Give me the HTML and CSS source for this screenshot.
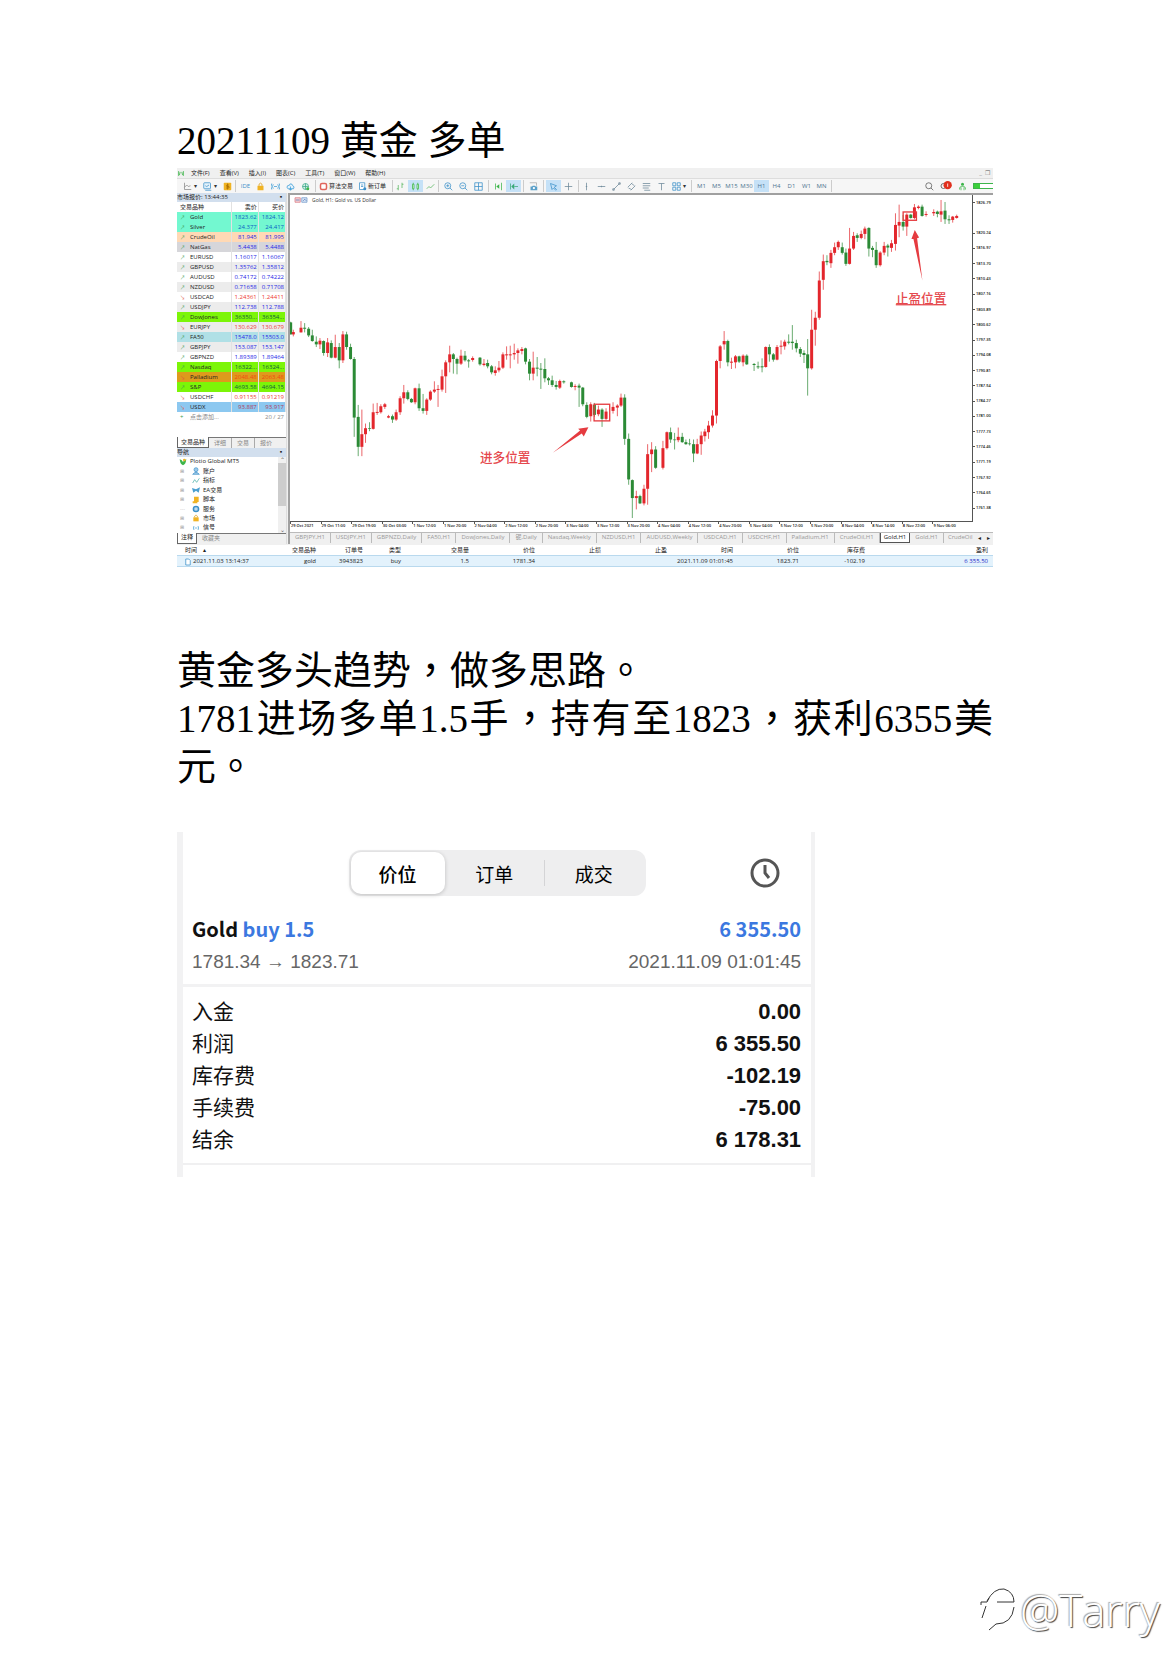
FILE: index.html
```html
<!DOCTYPE html>
<html lang="zh-CN">
<head>
<meta charset="utf-8">
<meta name="viewport" content="width=device-width, initial-scale=1">
<title>20211109 黄金 多单</title>
<link rel="stylesheet" href="styles.css">
</head>
<body>
<main class="doc">
<h1 class="doc-title">20211109 黄金 多单</h1>

<section class="terminal" aria-label="MT5">
  <nav class="menubar">
    <svg class="logo" viewBox="0 0 10 8"><path d="M2 1v6M4 2l-1 4M6 2l1 4M8 1v6" stroke="#3db54a" fill="none"/></svg>
    <a href="#">文件(F)</a><a href="#">查看(V)</a><a href="#">插入(I)</a><a href="#">图表(C)</a><a href="#">工具(T)</a><a href="#">窗口(W)</a><a href="#">帮助(H)</a>
    <span class="win-controls">_ &nbsp;❐</span>
  </nav>

  <div class="toolbar">
    <div class="group group-first">
      <button class="drop" aria-label="图表"><svg viewBox="0 0 12 12"><path d="M2 1v9h9M2 7l3-3 2 2 3-1" stroke="#888" fill="none"/></svg><i>▾</i></button>
      <button class="drop" aria-label="模板"><svg viewBox="0 0 12 12"><rect x="1" y="1" width="9" height="8" rx="1" stroke="#3a8fc8" fill="#e4f2fb"/><path d="M3 5l2 1 3-2M3 11h8" stroke="#3a8fc8" fill="none"/></svg><i>▾</i></button>
      <button aria-label="金额"><svg viewBox="0 0 12 12"><rect x="1" y="1" width="10" height="10" rx="1" fill="#f0b323"/><path d="M8 4H5v2h3v2H4M6 2v8" stroke="#a86c00" fill="none"/></svg></button>
    </div>
    <div class="group wide">
      <button class="ide">IDE</button>
      <button aria-label="市场"><svg viewBox="0 0 12 12"><path d="M2 5h8v6H2z" fill="#f0b323"/><path d="M4 5V3q2-3 4 0v2" stroke="#d89a10" fill="none"/></svg></button>
      <button aria-label="信号"><svg viewBox="0 0 12 12"><path d="M3 3q-2 3 0 6M9 3q2 3 0 6M4 6h4M1 2q-2 4 0 8M11 2q2 4 0 8" stroke="#3a9bd5" fill="none"/></svg></button>
      <button aria-label="云"><svg viewBox="0 0 12 12"><path d="M3 9q-3-1-1-4 1-1 2 0 1-4 4-2l1 2q3 1 1 4zM6 6v5M4 9l2 2 2-2" stroke="#3a9bd5" fill="#e4f2fb"/></svg></button>
      <button aria-label="网络"><svg viewBox="0 0 12 12"><circle cx="6" cy="6" r="4" stroke="#3aa88a" fill="#d8f0e8"/><path d="M2 6h8M6 2v8" stroke="#3aa88a"/><circle cx="9" cy="9" r="2" fill="#3db54a"/></svg></button>
    </div>
    <div class="group wide">
      <button class="text-button"><svg viewBox="0 0 12 12"><rect x="2" y="2" width="8" height="8" rx="2" stroke="#e0655c" stroke-width="2" fill="#fff"/></svg>算法交易</button>
      <button class="text-button"><svg viewBox="0 0 12 12"><path d="M2 1h7v9H2zM4 4h3M4 6h3" stroke="#3a8fc8" fill="#fff"/><circle cx="9" cy="9" r="2" fill="#3a8fc8"/></svg>新订单</button>
    </div>
    <div class="group">
      <button aria-label="柱形图"><svg viewBox="0 0 12 12"><path d="M3 4v7M1 9h2M8 1v7M8 3h2" stroke="#57b65f" fill="none"/></svg></button>
      <button class="on" aria-label="蜡烛图"><svg viewBox="0 0 12 12"><path d="M3 1v10M9 1v10" stroke="#3db54a"/><path d="M2 3h2v6H2zM8 3h2v6H8z" stroke="#3db54a" fill="#d9f4d9"/></svg></button>
      <button aria-label="折线图"><svg viewBox="0 0 12 12"><path d="M1 9l3-3 2 2 5-5" stroke="#57b65f" fill="none"/></svg></button>
    </div>
    <div class="group wide">
      <button aria-label="放大"><svg viewBox="0 0 12 12"><circle cx="5" cy="5" r="4" class="ln"/><path d="M8 8l3 3M3 5h4M5 3v4" class="ln"/></svg></button>
      <button aria-label="缩小"><svg viewBox="0 0 12 12"><circle cx="5" cy="5" r="4" class="ln"/><path d="M8 8l3 3M3 5h4" class="ln"/></svg></button>
      <button aria-label="平铺"><svg viewBox="0 0 12 12"><path d="M1 1h10v10H1zM6 1v10M1 6h10" class="ln"/></svg></button>
    </div>
    <div class="group wide">
      <button aria-label="自动滚动"><svg viewBox="0 0 12 12"><path d="M2 2v8M10 1v10" stroke="#3db54a"/><path d="M3 6l4-3v6z" fill="#3db54a"/></svg></button>
      <button class="on" aria-label="图表平移"><svg viewBox="0 0 12 12"><path d="M2 2v8M7 6h5" stroke="#3aa878"/><path d="M3 6l4-4v8z" fill="#3aa878"/></svg></button>
    </div>
    <div class="group wide">
      <button aria-label="截图"><svg viewBox="0 0 12 12"><path d="M1 1h9v4" stroke="#aaa" fill="none"/><path d="M2 6h2l1-1h3l1 1h2v5H2z" fill="#5a9fc8"/><circle cx="6.500" cy="8" r="1.500" fill="#fff"/></svg></button>
    </div>
    <div class="group wide">
      <button class="on" aria-label="光标"><svg viewBox="0 0 12 12"><path d="M2 2l8 3-3 2 3 3-1 1-3-3-2 2z" class="ln"/></svg></button>
      <button aria-label="十字线"><svg viewBox="0 0 12 12"><path d="M6 1v10M1 6h10" class="gr"/></svg></button>
    </div>
    <div class="group">
      <button aria-label="垂直线"><svg viewBox="0 0 12 12"><path d="M6 1v10M5 6h2" class="gr"/></svg></button>
      <button aria-label="水平线"><svg viewBox="0 0 12 12"><path d="M1 6h10M6 5v2" class="gr"/></svg></button>
      <button aria-label="趋势线"><svg viewBox="0 0 12 12"><path d="M2 10l8-8M1 9h2v2H1zM9 1h2v2H9z" class="gr"/></svg></button>
      <button aria-label="通道"><svg viewBox="0 0 12 12"><path d="M1 7l6-6M5 11l6-6M2 8l4 2M6 2l4 3" class="gr"/></svg></button>
      <button aria-label="斐波那契"><svg viewBox="0 0 12 12"><path d="M1 2h10M1 5h10M1 8h8M3 11h8" class="gr"/></svg></button>
      <button aria-label="文本"><svg viewBox="0 0 12 12"><path d="M2 2h8M6 2v9" class="gr"/></svg></button>
      <button class="drop shapes" aria-label="图形"><svg viewBox="0 0 12 12"><path d="M1 1h4v4H1zM7 1h4v4H7zM1 7h4v4H1zM7 7h4v4H7z" class="ln"/></svg><i>▾</i></button>
    </div>
    <div class="group wide periods">
      <button>M1</button><button>M5</button><button>M15</button><button>M30</button><button class="on">H1</button><button>H4</button><button>D1</button><button>W1</button><button>MN</button>
    </div>
    <div class="status">
      <svg viewBox="0 0 12 12"><circle cx="5" cy="5" r="4" stroke="#555" fill="none"/><path d="M8 8l3 3" stroke="#555"/></svg>
      <svg class="bell" viewBox="0 0 14 12"><circle cx="4" cy="6" r="3" stroke="#555" fill="none"/><circle cx="9" cy="5" r="5" fill="#e0301e"/><path d="M9 3v4" stroke="#fff"/></svg>
      <svg viewBox="0 0 12 12"><circle cx="6" cy="3" r="2" fill="#3db54a"/><path d="M2 10q0-5 4-4 4-1 4 4M4 7v4M8 7v4" stroke="#3db54a" fill="none"/></svg>
      <span class="battery"><span></span></span>
    </div>
  </div>

  <div class="workspace">
    <aside class="side">
      <div class="pane-title"><span>市场报价: 13:44:35</span><b>▪</b></div>
      <table class="quotes">
        <thead><tr><th>交易品种</th><th>卖价</th><th>买价</th></tr></thead>
        <tbody>
          <tr class="aqua"><td>Gold</td><td>1823.62</td><td>1824.12</td></tr>
          <tr class="aqua"><td>Silver</td><td>24.377</td><td>24.417</td></tr>
          <tr class="peach"><td>CrudeOil</td><td>81.945</td><td>81.995</td></tr>
          <tr class="silver"><td>NatGas</td><td>5.4438</td><td>5.4488</td></tr>
          <tr><td>EURUSD</td><td>1.16017</td><td>1.16067</td></tr>
          <tr class="alt"><td>GBPUSD</td><td>1.35762</td><td>1.35812</td></tr>
          <tr><td>AUDUSD</td><td>0.74172</td><td>0.74222</td></tr>
          <tr class="alt"><td>NZDUSD</td><td>0.71658</td><td>0.71708</td></tr>
          <tr class="down"><td>USDCAD</td><td>1.24361</td><td>1.24411</td></tr>
          <tr class="alt"><td>USDJPY</td><td>112.738</td><td>112.788</td></tr>
          <tr class="lawn"><td>DowJones</td><td>36350...</td><td>36354...</td></tr>
          <tr class="alt down"><td>EURJPY</td><td>130.629</td><td>130.679</td></tr>
          <tr class="powder"><td>FA50</td><td>15478.0</td><td>15503.0</td></tr>
          <tr class="alt"><td>GBPJPY</td><td>153.087</td><td>153.147</td></tr>
          <tr><td>GBPNZD</td><td>1.89389</td><td>1.89464</td></tr>
          <tr class="lawn"><td>Nasdaq</td><td>16322...</td><td>16324...</td></tr>
          <tr class="amber down"><td>Palladium</td><td>2048.48</td><td>2063.48</td></tr>
          <tr class="lawn"><td>S&amp;P</td><td>4693.58</td><td>4694.15</td></tr>
          <tr class="down"><td>USDCHF</td><td>0.91155</td><td>0.91219</td></tr>
          <tr class="sky down"><td>USDX</td><td>93.887</td><td>93.917</td></tr>
        </tbody>
        <tfoot><tr><td>点击添加...</td><td></td><td>20 / 27</td></tr></tfoot>
      </table>
      <div class="pane-tabs"><button class="current">交易品种</button><button>详细</button><button>交易</button><button>报价</button></div>
      <div class="pane-title"><span>导航</span><b>▪</b></div>
      <div class="tree-box">
        <ul class="tree">
          <li class="root"><svg viewBox="0 0 12 12"><path d="M1 2q3 0 5 4 1-3 5-4-1 8-5 9-4-1-5-9z" fill="#3db54a"/><circle cx="8" cy="3" r="2" fill="#f0b323"/></svg>Plotio Global MT5</li>
          <li><svg viewBox="0 0 12 12"><circle cx="6" cy="4" r="3" fill="#9cc8e8" stroke="#3a8fc8"/><path d="M1 11q5-6 10 0z" fill="#9cc8e8" stroke="#3a8fc8"/></svg>账户</li>
          <li><svg viewBox="0 0 12 12"><path d="M1 9l3-5 3 4 4-6" stroke="#3aa8a0" fill="none"/></svg>指标</li>
          <li><svg viewBox="0 0 12 12"><path d="M0 3l6 2 6-3-2 8-4-3-4 3z" fill="#4a9fd0"/></svg>EA交易</li>
          <li><svg viewBox="0 0 12 12"><path d="M3 1h7v8H3zM1 8h7v3H1z" fill="#f0b323"/></svg>脚本</li>
          <li class="leaf"><svg viewBox="0 0 12 12"><circle cx="6" cy="6" r="4" fill="#9cc8e8" stroke="#3a8fc8" stroke-width="2"/><circle cx="6" cy="6" r="1" fill="#fff"/></svg>服务</li>
          <li><svg viewBox="0 0 12 12"><path d="M2 5h8v6H2z" fill="#f0b323"/><path d="M4 5V3q2-3 4 0v2" stroke="#d89a10" fill="none"/></svg>市场</li>
          <li><svg viewBox="0 0 12 12"><path d="M3 3q-2 3 0 6M9 3q2 3 0 6M4 6h4" stroke="#3a9bd5" fill="none"/></svg>信号</li>
        </ul>
        <div class="scroll"><i>⌃</i><span></span><i>⌄</i></div>
      </div>
      <div class="pane-tabs"><button class="current">注释</button><button>收藏夹</button></div>
    </aside>

    <section class="chart">
      <div class="plot-row">
        <div class="plot">
          <div class="plot-title"><svg viewBox="0 0 18 8"><path d="M1 1h7v6H1z" fill="#f6d5d8" stroke="#d87880"/><path d="M10 1h7v6h-7z" fill="#d5e4f6" stroke="#7098c8"/><path d="M2 4h5M12 5l2-2 2 2" stroke="#5070b0" fill="none"/></svg>Gold, H1: Gold vs. US Dollar</div>
          <svg id="candles" class="candles" viewBox="30 105 2050 979" role="img" aria-label="Gold H1">
            <g id="series"></g>
            <g class="notes">
              <rect x="944" y="734" width="47" height="50"/>
              <path d="M820 880L902 813L896 808L927 803L913 831L907 822Z"/>
              <text x="601" y="909">进多位置</text>
              <rect x="1873" y="156" width="40" height="25"/>
              <path d="M1931 363L1904 237L1898 237L1908 210L1921 233L1915 235Z"/>
              <text x="1851" y="430" class="under">止盈位置</text>
            </g>
          </svg>
        </div>
        <ol class="prices">
          <li>1826.79</li><li class="blank"></li><li>1820.24</li><li>1816.97</li><li>1813.70</li><li>1810.43</li><li>1807.16</li><li>1803.89</li><li>1800.62</li><li>1797.35</li><li>1794.08</li><li>1790.81</li><li>1787.54</li><li>1784.27</li><li>1781.00</li><li>1777.73</li><li>1774.46</li><li>1771.19</li><li>1767.92</li><li>1764.65</li><li>1761.38</li>
        </ol>
      </div>
      <ol class="times">
        <li>29 Oct 2021</li><li>29 Oct 11:00</li><li>29 Oct 19:00</li><li>30 Oct 03:00</li><li>1 Nov 12:00</li><li>1 Nov 20:00</li><li>2 Nov 04:00</li><li>2 Nov 12:00</li><li>2 Nov 20:00</li><li>3 Nov 04:00</li><li>3 Nov 12:00</li><li>3 Nov 20:00</li><li>4 Nov 04:00</li><li>4 Nov 12:00</li><li>4 Nov 20:00</li><li>5 Nov 04:00</li><li>5 Nov 12:00</li><li>5 Nov 20:00</li><li>8 Nov 04:00</li><li>8 Nov 14:00</li><li>8 Nov 22:00</li><li>9 Nov 06:00</li>
      </ol>
      <div class="chart-tabs">
        <div class="tab-strip"><button>GBPJPY,H1</button><button>USDJPY,H1</button><button>GBPNZD,Daily</button><button>FA50,H1</button><button>DowJones,Daily</button><button>铌,Daily</button><button>Nasdaq,Weekly</button><button>NZDUSD,H1</button><button>AUDUSD,Weekly</button><button>USDCAD,H1</button><button>USDCHF,H1</button><button>Palladium,H1</button><button>CrudeOil,H1</button><button class="current">Gold,H1</button><button>Gold,H1</button><button>CrudeOil</button></div>
        <span class="arrows"><i>◂</i><i>▸</i></span>
      </div>
    </section>
  </div>

  <table class="trades">
    <colgroup><col class="c-time"><col class="c-symbol"><col class="c-order"><col class="c-type"><col class="c-mid"><col class="c-mid"><col class="c-mid"><col class="c-mid"><col class="c-mid"><col class="c-mid"><col class="c-mid"><col></colgroup>
    <thead><tr><th>时间 &nbsp; &nbsp;▴</th><th>交易品种</th><th>订单号</th><th>类型</th><th>交易量</th><th>价位</th><th>止损</th><th>止盈</th><th>时间</th><th>价位</th><th>库存费</th><th>盈利</th></tr></thead>
    <tbody><tr><td><svg viewBox="0 0 8 10"><path d="M1 1h4l2 2v6H1z" fill="#fff" stroke="#3a8fc8"/></svg>2021.11.03 13:14:37</td><td>gold</td><td>3943823</td><td>buy</td><td>1.5</td><td>1781.34</td><td></td><td></td><td>2021.11.09 01:01:45</td><td>1823.71</td><td>-102.19</td><td class="profit">6 355.50</td></tr></tbody>
  </table>
</section>

<div class="prose" lang="zh-TW">
  <p>黄金多头趋势，做多思路。</p>
  <p>1781进场多单1.5手，持有至1823，获利6355美元。</p>
</div>

<section class="receipt">
  <header class="receipt-top">
    <div class="segmented"><button class="current">价位</button><button>订单</button><button>成交</button></div>
    <button class="clock" aria-label="历史"><svg viewBox="0 0 30 30"><circle cx="15" cy="15" r="13"/><path d="M15 7v8l4 5"/></svg></button>
  </header>
  <div class="deal">
    <div class="deal-line strong"><span>Gold <em>buy 1.5</em></span><em>6 355.50</em></div>
    <div class="deal-line"><span>1781.34 → 1823.71</span><span>2021.11.09 01:01:45</span></div>
  </div>
  <dl class="totals">
    <div><dt>入金</dt><dd>0.00</dd></div>
    <div><dt>利润</dt><dd>6 355.50</dd></div>
    <div><dt>库存费</dt><dd>-102.19</dd></div>
    <div><dt>手续费</dt><dd>-75.00</dd></div>
    <div><dt>结余</dt><dd>6 178.31</dd></div>
  </dl>
</section>
</main>

<footer class="signature">
  <svg viewBox="0 0 36 44"><path d="M7 13Q14 0 24 1Q34 4 34 14M17 14H34M34 19Q32 36 16 36L9 42M1 17V14H7L9 10M6 18L2 30"/></svg>
  <span>@Tarry</span>
</footer>
<script src="chart.js"></script>
</body>
</html>
```
FILE: styles.css
```css
* { box-sizing: border-box; }
body {
  margin: 0;
  min-height: 100vh;
  display: flex;
  flex-direction: column;
  background: #fff;
  color: #000;
  font-family: "Liberation Serif", "Noto Sans CJK SC", serif;
}
button { border: 0; padding: 0; margin: 0; background: none; color: inherit; font: inherit; }
a { color: inherit; text-decoration: none; }
i, em { font-style: normal; }
ol, ul, dl, dd, p { margin: 0; padding: 0; list-style: none; }
table { border-collapse: collapse; border-spacing: 0; }
th, td { padding: 0; font-weight: 400; }

.doc { width: 100%; max-width: 816px; margin: 0 auto; padding-top: 117px; }
.doc-title { margin: 0 0 3px; font-size: 39px; line-height: 48px; font-weight: 400; }

/* Trading terminal */
.terminal {
  font-family: "Open Sans", "Noto Sans CJK SC", sans-serif;
  font-size: 6px;
  line-height: 10px;
  color: #333;
  background: #f0f0f0;
  overflow: hidden;
}
.menubar { display: flex; align-items: center; gap: 10px; height: 10px; color: #222; }
.logo { width: 8px; height: 7px; margin-right: -4px; }
.win-controls { margin-left: auto; padding-right: 3px; color: #888; }

.toolbar { display: flex; align-items: center; height: 15px; border-top: 1px solid #ddd; background: #f6f6f6; }
.group { display: flex; height: 12px; border-right: 1px solid #ccc; }
.group.wide { padding: 0 2px; }
.group-first { padding-left: 3px; }
.group button { display: flex; align-items: center; justify-content: center; width: 15px; height: 12px; }
.group svg, .status svg { width: 9px; height: 9px; flex: none; }
.group .drop { width: 20px; gap: 2px; }
.group .shapes { margin-right: 2px; }
.group .on { background: #c5e1f7; }
.group .text-button { width: 36px; gap: 1px; color: #222; }
.group .ide { color: #3a8fc8; }
.periods { color: #4d7590; }
.ln { fill: none; stroke: #3a8fc8; }
.gr { fill: none; stroke: #6b8798; }
.status { display: flex; align-items: center; gap: 6px; margin-left: auto; }
.status .bell { width: 12px; height: 10px; }
.battery { width: 20px; height: 6px; border: 1px solid #3db54a; border-right: 0; background: #fff; }
.battery span { display: block; width: 6px; height: 4px; background: #3ccf3c; }

.workspace { display: grid; grid-template-columns: 110px minmax(0, 1fr); }
.side { display: flex; flex-direction: column; background: #fff; border-right: 1px solid #ddd; }
.pane-title { display: flex; justify-content: space-between; height: 9px; padding-right: 2px; line-height: 9px; background: #d2dfee; color: #222; }
.quotes { width: 100%; table-layout: fixed; background: #fff; color: #222; }
.quotes tr { height: 10px; }
.quotes th, .quotes td { text-align: right; padding-right: 1px; border-right: 1px solid #e2e2e2; white-space: nowrap; overflow: hidden; }
.quotes th:first-child, .quotes td:first-child { width: 54px; text-align: left; }
.quotes th:first-child { padding-left: 3px; }
.quotes tbody td { color: #2626e6; }
.quotes tbody td:first-child { color: #222; }
.quotes tbody td:first-child::before { content: "↗"; display: inline-block; width: 10px; padding-left: 3px; font-size: 5px; color: #3a9b50; }
.quotes .down td { color: #ee3a32; }
.quotes .down td:first-child::before { content: "↘"; color: #e05040; }
.quotes .aqua { background: #73f8d0; }
.quotes .aqua td:not(:first-child) { color: #0b5fc4; }
.quotes .peach { background: #ffd9b5; }
.quotes .silver { background: #d6d6da; }
.quotes .alt { background: #ececec; }
.quotes .lawn { background: #7cf508; }
.quotes .lawn td:not(:first-child) { color: #115a40; }
.quotes .powder { background: #b0e0e6; }
.quotes .amber { background: #de9a1c; }
.quotes .amber td:not(:first-child) { color: #f04a10; }
.quotes .sky { background: #8cc8f0; }
.quotes .sky td:not(:first-child) { color: #b03a60; }
.quotes tfoot td { color: #888; border-color: transparent; }
.quotes tfoot td:first-child::before { content: "+"; display: inline-block; width: 10px; padding-left: 3px; color: #3a9b50; }
.pane-tabs { display: flex; height: 11px; background: #f0f0f0; border-top: 1px solid #777; color: #888; }
.pane-tabs button { padding: 0 5px; border-right: 1px solid #aaa; line-height: 9px; }
.pane-tabs button:last-child { border-right: 0; }
.pane-tabs .current { margin-top: -1px; padding: 0 3px; background: #fff; color: #222; border: 1px solid #666; border-top: 0; }
.quotes + .pane-tabs { margin-top: 15px; }
.tree-box { flex: 1; display: flex; min-height: 0; height: 73px; overflow: hidden; }
.tree { flex: 1; display: grid; grid-template-rows: repeat(8, 1fr); color: #222; }
.tree li { display: flex; align-items: center; gap: 3px; min-height: 0; line-height: 9px; }
.tree li::before { content: "⊞"; width: 9px; padding-left: 3px; font-size: 5px; color: #999; }
.tree .root::before { display: none; }
.tree .leaf::before { content: "┄"; }
.tree svg { width: 8px; height: 8px; }
.tree .root svg { margin-left: 2px; }
.scroll { display: flex; flex-direction: column; width: 8px; background: #f0f0f0; line-height: 6px; text-align: center; color: #666; }
.scroll span { height: 43px; background: #cdcdcd; }
.scroll i:last-child { margin-top: auto; }

.chart { display: flex; flex-direction: column; min-width: 0; margin-left: 1px; border: solid #a0a0a0; border-width: 2px 0 0 2px; background: #fff; }
.plot-row { display: grid; grid-template-columns: minmax(0, 1fr) 20px; }
.plot { position: relative; border-right: 1px solid #555; border-bottom: 1px solid #555; }
.plot-title { position: absolute; top: 0; left: 2px; display: flex; align-items: center; gap: 2px; font-size: 5px; }
.plot-title svg { width: 18px; height: 6px; }
.candles { display: block; width: 100%; }
.bull { stroke: #e3262c; }
.bear { stroke: #2b8a35; }
.wick { stroke-width: 3; opacity: .7; }
.stick { stroke-width: 9; }
.notes rect { fill: none; stroke: #e53b40; stroke-width: 4; }
.notes path { fill: #e53b40; }
.notes text { fill: #e5484d; font-size: 38px; font-weight: 500; }
.notes .under { text-decoration: underline; }
.prices { display: grid; grid-template-rows: repeat(21, 1fr); padding-bottom: 6px; font-size: 4px; font-weight: 600; line-height: 6px; color: #111; }
.prices li { display: flex; align-items: center; gap: 1px; }
.prices li::before { content: ""; width: 2px; height: 1px; background: #555; }
.prices .blank { visibility: hidden; }
.times { display: grid; grid-template-columns: repeat(22, minmax(0, 1fr)); height: 10px; padding-right: 30px; font-size: 4px; font-weight: 600; line-height: 8px; color: #111; }
.times li { white-space: nowrap; border-left: 1px solid transparent; border-image: linear-gradient(#555 30%, transparent 30%) 1; }
.chart-tabs { display: flex; flex: 1; min-height: 12px; background: #f0f0f0; border-top: 1px solid #bbb; color: #999; }
.tab-strip { flex: 1; display: flex; min-width: 0; overflow: hidden; }
.tab-strip button { flex: none; height: 10px; padding: 0 5px; line-height: 9px; border-right: 1px solid #bbb; }
.tab-strip button:last-child { padding: 0 0 0 4px; border-right: 0; }
.tab-strip .current { padding: 0 3px; color: #222; background: #fff; border: 1px solid #555; border-top: 0; }
.arrows { display: flex; width: 18px; justify-content: space-around; color: #222; }

.trades { width: 100%; table-layout: fixed; margin-top: 1px; background: #fff; color: #222; }
.trades tr { height: 11px; }
.trades th, .trades td { text-align: right; padding-right: 2px; white-space: nowrap; }
.trades th:first-child, .trades td:first-child { text-align: left; padding-left: 8px; }
.trades th:last-child, .trades td:last-child { padding-right: 5px; }
.trades th:nth-child(4), .trades td:nth-child(4) { padding-right: 4px; }
.trades tbody { background: #e3f2fc; border: solid #b9d9ee; border-width: 1px 0; }
.trades svg { width: 6px; height: 8px; margin-right: 2px; vertical-align: middle; }
.trades .profit { color: #2626c8; }
.c-time { width: 83px; }
.c-symbol { width: 58px; }
.c-order { width: 47px; }
.c-type { width: 40px; }
.c-mid { width: 66px; }

/* Commentary */
.prose {
  margin-top: 80px;
  font-family: "Liberation Serif", "Noto Sans CJK TC", serif;
  font-size: 39px;
  line-height: 48px;
  text-align: justify;
}

/* Phone statement */
.receipt {
  width: 78.2%;
  margin-top: 41px;
  padding-bottom: 12px;
  border: solid #f2f2f3;
  border-width: 0 4px 0 6px;
  font-family: "Liberation Sans", "Noto Sans CJK SC", sans-serif;
}
.receipt-top { display: grid; grid-template-columns: 1fr 297px 1fr; align-items: center; padding: 18px 0 16px; }
.segmented { grid-column: 2; display: grid; grid-template-columns: 94px 1fr 1fr; height: 46px; padding: 2px; border-radius: 12px; background: #eeeeef; font-size: 19px; }
.segmented button { position: relative; border-radius: 10px; }
.segmented .current { background: #fff; box-shadow: 0 1px 4px #0003; font-weight: 500; }
.segmented button:last-child::before { content: ""; position: absolute; left: 0; top: 8px; bottom: 8px; width: 1px; background: #d4d4d6; }
.clock { justify-self: end; width: 30px; height: 30px; margin-right: 31px; }
.clock svg { display: block; fill: none; stroke: #555; stroke-width: 3; }
.deal { padding: 0 10px 6px 9px; border-bottom: 3px solid #f2f2f3; }
.deal-line { display: flex; justify-content: space-between; font-size: 19px; line-height: 32px; color: #666; }
.deal-line.strong { font-family: "Noto Sans CJK SC", sans-serif; font-size: 20px; line-height: 34px; font-weight: 700; color: #111; }
.deal-line em { color: #3b78e0; }
.totals { padding: 9px 10px 7px 9px; border-bottom: 2px solid #f0f0f1; }
.totals div { display: flex; justify-content: space-between; line-height: 32px; color: #111; }
.totals dt { font-size: 21px; }
.totals dd { font-size: 22px; font-weight: 700; }

.signature { display: flex; align-items: center; justify-content: flex-end; gap: 4px; margin-top: auto; padding: 0 10px 39px 0; font-family: "Open Sans", sans-serif; font-weight: 300; font-size: 44px; line-height: 52px; color: #fff; }
.signature span { text-shadow: -1px -1px 1px #aaa, 1px 1px 1px #444; }
.signature svg { width: 36px; height: 44px; fill: none; stroke: #333; }
```
FILE: chart.js
```js
// Each bar: direction, x, high, body top, body bottom, low (viewBox units).
const bars = `
G 32 486 488 524 524|R 40 510 517 524 530|R 63 484 504 518 518|G 74 490 504 507 518|G 86 502 507 527 532|G 97 510 527 544 546
G 109 530 546 554 562|R 120 535 543 554 568|G 131 542 544 580 588|R 143 535 548 580 592|G 154 542 550 594 596|R 166 525 562 594 596
G 178 550 562 602 626|R 189 514 524 602 610|G 200 516 524 562 570|G 212 552 562 598 600|G 223 592 598 774 832|G 235 736 772 862 890
R 246 750 824 862 890|R 257 792 806 824 850|G 269 788 806 808 815|R 280 732 758 808 810|R 292 730 757 760 766|R 303 734 740 758 762
R 315 730 734 742 748|R 326 766 770 774 776|G 338 765 770 780 790|R 349 750 758 780 784|R 361 710 716 758 766|R 372 676 698 716 732
G 384 692 698 718 722|G 395 715 718 728 730|R 406 684 686 728 734|G 418 672 686 746 754|G 430 703 746 754 762|R 441 716 720 754 766
R 452 692 696 720 724|R 464 665 690 696 700|R 475 676 688 691 742|R 487 630 650 690 696|R 498 602 608 650 700|R 510 558 584 608 638
G 521 580 584 598 642|G 532 594 598 612 644|R 544 570 588 612 616|G 556 574 588 602 606|G 567 598 602 605 624|R 579 590 595 601 606
G 601 592 594 614 618|R 613 598 612 616 620|G 624 600 610 620 626|G 636 616 620 638 644|R 647 620 632 640 648|R 658 604 624 632 638
R 670 578 584 624 628|R 681 560 584 587 600|R 692 558 584 587 626|R 704 552 580 584 600|R 715 566 572 580 612|R 727 562 568 574 584
G 738 564 566 606 614|G 750 598 606 642 662|R 761 576 624 642 662|G 773 592 624 627 650|G 784 610 627 630 688|G 796 596 628 656 668
G 807 652 656 662 676|G 818 648 662 676 682|G 830 664 676 682 690|R 841 660 664 684 688|G 853 662 665 668 672|G 876 666 668 682 684
R 887 674 679 682 692|G 899 672 678 684 742|G 910 682 684 734 740|G 922 728 736 772 776|R 934 728 734 770 786|G 945 730 736 766 772
R 957 738 750 764 770|G 968 746 750 778 802|R 980 746 756 778 782|R 1001 728 742 754 762|R 1014 734 738 744 770|R 1025 702 714 738 742
G 1036 704 714 838 856|G 1048 822 838 960 976|G 1059 960 962 1016 1076|R 1071 994 1010 1016 1050|G 1082 1006 1010 1032 1034|R 1094 976 988 1032 1038
R 1105 854 884 988 1036|R 1117 848 870 884 938|G 1129 860 870 925 928|R 1151 844 866 925 930|R 1163 816 818 866 870|G 1174 804 818 840 850
G 1186 820 840 842 870|R 1197 804 832 842 848|G 1209 820 832 848 850|G 1220 840 848 854 856|G 1231 838 852 854 858|G 1243 840 854 882 908
R 1254 838 854 882 884|R 1266 816 828 854 886|R 1277 808 816 830 846|R 1288 784 798 818 838|R 1300 752 768 798 804|R 1312 600 604 768 792
R 1323 556 560 604 626|R 1335 514 544 554 570|G 1346 540 544 608 620|R 1357 594 606 609 628|R 1369 586 590 608 626|G 1380 588 590 606 610
R 1392 584 588 608 620|G 1403 584 588 614 616|G 1425 610 613 616 634|G 1437 606 620 623 628|G 1449 596 620 623 638|R 1460 560 562 622 624
G 1471 554 562 584 606|G 1483 580 584 600 606|R 1494 556 562 600 602|R 1506 542 558 561 584|R 1517 540 546 560 570|G 1529 524 546 549 554
G 1540 496 546 550 570|G 1552 540 550 566 578|G 1564 562 568 582 592|G 1575 572 580 586 610|G 1586 538 584 626 708|R 1598 450 510 626 630
R 1609 456 474 510 558|R 1621 335 362 474 480|R 1633 284 304 360 390|G 1644 286 303 307 316|R 1656 270 279 310 324|R 1667 248 262 279 286
R 1678 242 246 262 270|G 1690 248 262 279 284|G 1701 266 278 312 318|R 1712 204 266 312 314|R 1724 216 228 266 270|G 1735 220 226 234 246
R 1747 212 222 234 238|R 1758 200 206 222 238|G 1770 202 204 266 290|G 1781 258 264 270 292|G 1792 246 270 316 324|R 1804 274 278 316 320
R 1816 246 258 278 286|G 1827 252 257 263 290|R 1838 240 250 264 276|R 1850 160 195 252 272|R 1861 134 186 197 232|G 1873 165 186 200 212
R 1884 160 164 200 228|G 1896 162 164 174 176|R 1907 132 142 174 178|R 1919 136 140 144 148|G 1930 134 140 168 170|R 1942 154 162 165 170
R 1965 148 156 160 168|G 1976 152 155 162 172|R 1987 120 154 164 186|G 1999 126 152 178 192|G 2011 166 178 181 192|R 2022 168 170 180 188
R 2034 164 168 174 176`.trim().split(/[|\n]/);

const series = document.getElementById("series");
function line(x, from, to, name) {
  const el = document.createElementNS("http://www.w3.org/2000/svg", "path");
  el.setAttribute("d", `M${x} ${from}V${to}`);
  el.setAttribute("class", name);
  series.append(el);
}
for (const bar of bars) {
  const [dir, x, high, top, bottom, low] = bar.split(" ");
  const tone = dir === "R" ? "bull" : "bear";
  line(x, high, low, `wick ${tone}`);
  line(x, top, bottom, `stick ${tone}`);
}
```
